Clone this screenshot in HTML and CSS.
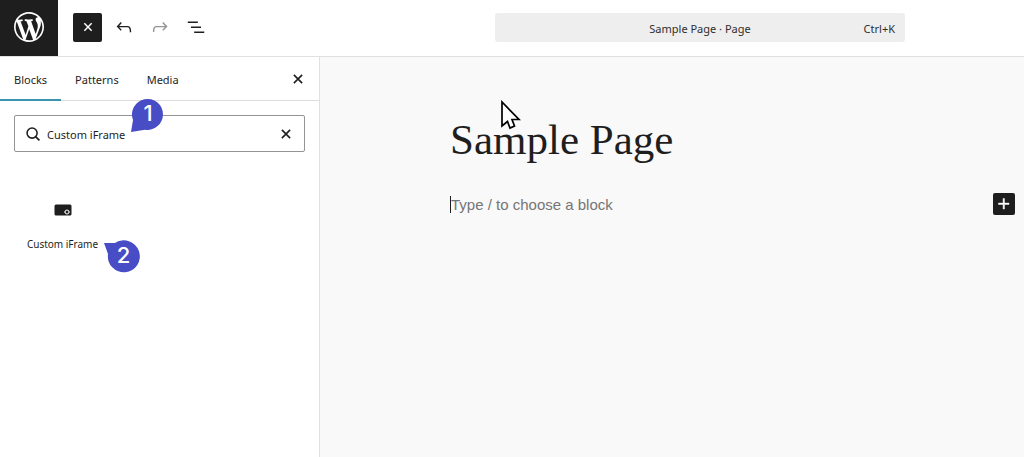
FILE: index.html
```
<!DOCTYPE html>
<html lang="en">
<head>
  <meta charset="UTF-8">
  <title>Sample Page</title>
  <meta name="viewport" content="width=device-width, initial-scale=1.0">
  <link rel="stylesheet" href="styles.css">
</head>
<body>

  <header class="header">
    <a class="logo" href="#" aria-label="View pages">
      <svg width="36" height="36" viewBox="-2 -2 24 24"><path d="M20 10c0-5.51-4.49-10-10-10C4.48 0 0 4.49 0 10c0 5.52 4.48 10 10 10 5.51 0 10-4.48 10-10zM7.78 15.37L4.37 6.22c.55-.02 1.17-.08 1.17-.08.5-.06.44-1.13-.06-1.11 0 0-1.45.11-2.37.11-.18 0-.37 0-.58-.01C4.12 2.69 6.87 1.11 10 1.11c2.33 0 4.45.87 6.05 2.34-.68-.11-1.65.39-1.65 1.58 0 .74.45 1.36.9 2.1.35.61.55 1.36.55 2.46 0 1.49-1.4 5-1.4 5l-3.03-8.37c.54-.02.82-.17.82-.17.5-.05.44-1.25-.06-1.22 0 0-1.44.12-2.38.12-.87 0-2.33-.12-2.33-.12-.5-.03-.56 1.2-.06 1.22l.92.08 1.26 3.41zM17.41 10c.24-.64.74-1.87.43-4.25.7 1.29 1.05 2.71 1.05 4.25 0 3.29-1.73 6.24-4.4 7.78.97-2.59 1.94-5.2 2.92-7.78zM6.1 18.09C3.12 16.65 1.11 13.53 1.11 10c0-1.3.23-2.48.72-3.59C3.25 10.3 4.67 14.2 6.1 18.09zm4.03-6.63l2.58 6.98c-.86.29-1.76.45-2.71.45-.79 0-1.57-.11-2.29-.33.81-2.38 1.62-4.74 2.42-7.1z"/></svg>
    </a>

    <div class="tools">
      <button type="button" class="tool tool-primary" aria-label="Close block inserter">
        <svg width="22" height="22" viewBox="0 0 24 24"><path d="M8 8l8 8M16 8l-8 8" stroke="currentColor" stroke-width="1.6"/></svg>
      </button>
      <button type="button" class="tool" aria-label="Undo">
        <svg width="22" height="22" viewBox="0 0 24 24"><path d="M18.3 11.7c-.6-.6-1.4-.9-2.3-.9H6.7l2.9-3.3-1.1-1-4.5 5L8.5 16l1-1-2.7-2.7H16c.5 0 .9.2 1.3.5 1 1 1 3.4 1 4.5v.3h1.5v-.2c0-1.5 0-4.3-1.5-5.7z"/></svg>
      </button>
      <button type="button" class="tool" aria-label="Redo" disabled>
        <svg width="22" height="22" viewBox="0 0 24 24"><path d="M15.6 6.5l-1.1 1 2.9 3.3H8c-.9 0-1.7.3-2.3.9-1.4 1.5-1.4 4.2-1.4 5.6v.2h1.5v-.3c0-1.1 0-3.5 1-4.5.3-.3.7-.5 1.3-.5h9.2L14.5 15l1.1 1.1 4.6-4.6-4.6-5z"/></svg>
      </button>
      <button type="button" class="tool" aria-label="Document overview">
        <svg width="22" height="22" viewBox="0 0 24 24"><path d="M3 6h11v1.5H3V6Zm3.5 5.5h11V13h-11v-1.5ZM21 17H10v1.5h11V17Z"/></svg>
      </button>
    </div>

    <button type="button" class="command-bar">
      <span class="document-title">Sample Page · Page</span>
      <span class="shortcut">Ctrl+K</span>
    </button>
  </header>

  <div class="body">
    <aside class="inserter">
      <div class="tabs">
        <button type="button" class="tab tab-active">Blocks</button>
        <button type="button" class="tab">Patterns</button>
        <button type="button" class="tab">Media</button>
        <button type="button" class="close" aria-label="Close">
          <svg width="22" height="22" viewBox="0 0 24 24"><path d="M7.5 7.5l9 9M16.5 7.5l-9 9" stroke="currentColor" stroke-width="1.7"/></svg>
        </button>
      </div>

      <div class="search">
        <label for="search" aria-label="Search">
          <svg width="22" height="22" viewBox="0 0 24 24"><circle cx="11" cy="11" r="5.5" fill="none" stroke="currentColor" stroke-width="1.7"/><path d="M14.8 14.8l4.2 4.2" stroke="currentColor" stroke-width="1.9"/></svg>
        </label>
        <input type="text" id="search" value="Custom iFrame">
        <button type="button" class="close" aria-label="Reset search">
          <svg width="22" height="22" viewBox="0 0 24 24"><path d="M7.5 7.5l9 9M16.5 7.5l-9 9" stroke="currentColor" stroke-width="1.7"/></svg>
        </button>
        <div class="callout callout-search">
          <svg width="34" height="34" viewBox="0 0 34 34"><path d="M0 34L2 22A15.5 15.5 0 1 1 14 31.7Z"/></svg>
          <span>1</span>
        </div>
      </div>

      <div class="blocks">
        <button type="button" class="block">
          <svg width="18" height="12" viewBox="0 0 18 12"><rect x=".5" y=".5" width="17" height="11" rx="1.5"/><circle cx="13" cy="8" r="2" fill="none" stroke="#fff"/><path d="M10.3 8h1M14.7 8h1" stroke="#fff"/></svg>
          <span>Custom iFrame</span>
        </button>
        <div class="callout callout-block">
          <svg width="36" height="34" viewBox="0 0 36 34"><path d="M0 3L11 3A16 16 0 1 1 4 14Z"/></svg>
          <span>2</span>
        </div>
      </div>
    </aside>

    <main class="canvas">
      <h1 class="page-title">Sample Page</h1>
      <div class="paragraph">
        <p>Type / to choose a block</p>
        <button type="button" class="add" aria-label="Add block">
          <svg width="22" height="22" viewBox="0 0 24 24"><path d="M11 12.5V17.5H12.5V12.5H17.5V11H12.5V6H11V11H6V12.5H11Z" stroke="currentColor" stroke-width=".5"/></svg>
        </button>
      </div>
      <svg class="pointer" width="22" height="30" viewBox="0 0 22 30"><path d="M2 2V26L7.5 21.5L10 28L14.5 26L12 19.5H19Z" fill="#fff" stroke="#000" stroke-width="1.7"/></svg>
    </main>
  </div>

</body>
</html>
```
FILE: styles.css
```
* {
  box-sizing: border-box;
}

body {
  margin: 0;
  min-height: 100vh;
  display: flex;
  flex-direction: column;
  font-family: "Segoe UI", "Noto Sans", sans-serif;
  font-size: 11px;
  color: #1e1e1e;
  background: #fff;
}

button, input {
  font: inherit;
  color: inherit;
  background: none;
  border: none;
  padding: 0;
}

button {
  cursor: pointer;
}

svg {
  display: block;
  fill: currentColor;
}

.header {
  display: flex;
  align-items: center;
  height: 57px;
  padding-right: 119px;
  border-bottom: 1px solid #e0e0e0;
}

.logo {
  display: flex;
  align-items: center;
  justify-content: center;
  width: 58px;
  height: 56px;
  padding-bottom: 2px;
  color: #fff;
  background: #1e1e1e;
}

.tools {
  display: flex;
  gap: 7px;
  margin-left: 15px;
  padding-bottom: 2px;
}

.tool {
  display: flex;
  align-items: center;
  justify-content: center;
  width: 29px;
  height: 29px;
  border-radius: 2px;
}

.tool:disabled {
  color: #949494;
}

.tool-primary {
  color: #fff;
  background: #1e1e1e;
}

.command-bar {
  display: grid;
  grid-template-columns: 1fr auto 1fr;
  align-items: center;
  width: 410px;
  height: 29px;
  margin: 0 0 2px auto;
  padding: 2px 10px 0;
  color: #2f2f2f;
  background: #eee;
  border-radius: 3px;
}

.document-title {
  grid-column: 2;
}

.shortcut {
  text-align: right;
}

.body {
  display: flex;
  flex: 1;
}

.inserter {
  width: 320px;
  border-right: 1px solid #e0e0e0;
}

.tabs {
  display: flex;
  height: 44px;
  border-bottom: 1px solid #ddd;
}

.tab {
  height: 44px;
  padding: 2px 14px 0;
  border-bottom: 2px solid transparent;
}

.tab-active {
  border-bottom-color: #3a94b0;
}

.close {
  display: flex;
  align-items: center;
}

.tabs .close {
  margin-left: auto;
  margin-right: 10px;
}

.search {
  position: relative;
  display: flex;
  align-items: center;
  height: 37px;
  margin: 14px;
  padding: 0 7px;
  border: 1px solid #949494;
  border-radius: 2px;
}

.search input {
  flex: 1;
  min-width: 0;
  margin-left: 3px;
  padding-top: 2px;
  outline: none;
}

.blocks {
  position: relative;
  padding: 24px 14px;
}

.block {
  display: flex;
  flex-direction: column;
  align-items: center;
  gap: 21px;
  width: 97px;
  padding: 14px 0;
  font-size: 10px;
}

/* Numbered step markers */
.callout {
  position: absolute;
  color: #484dc6;
}

.callout span {
  position: absolute;
  inset: 0;
  font-family: Inter, sans-serif;
  font-size: 22px;
  font-weight: 500;
  line-height: 31px;
  text-align: center;
  color: #fff;
}

.callout-search {
  left: 116px;
  top: -18px;
}

.callout-block {
  left: 104px;
  top: 74px;
}

.callout-block span {
  padding-left: 3px;
}

.canvas {
  position: relative;
  flex: 1;
  padding: 58px 9px 0 130px;
  background: #f9f9f9;
}

.page-title {
  margin: 0;
  font-family: "Liberation Serif", serif;
  font-size: 43px;
  font-weight: 400;
  line-height: 50px;
}

.paragraph {
  display: flex;
  align-items: center;
  justify-content: space-between;
  margin-top: 28px;
}

.paragraph p {
  margin: 0;
  border-left: 1px solid #1e1e1e;
  font-family: "Liberation Sans", sans-serif;
  font-size: 15px;
  line-height: 17px;
  color: #757575;
}

.add {
  color: #fff;
  background: #1e1e1e;
  border-radius: 2px;
}

.pointer {
  position: absolute;
  left: 180px;
  top: 43px;
}
```
